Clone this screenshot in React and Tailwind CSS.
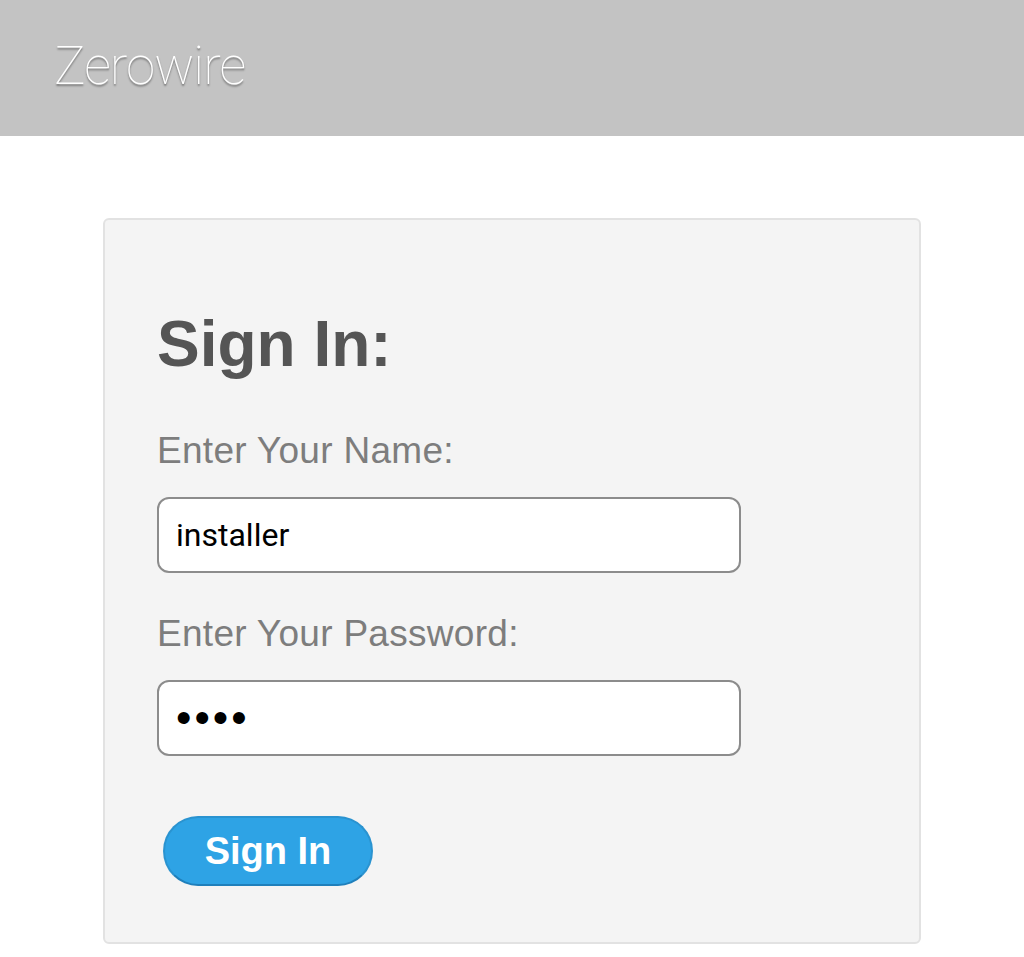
import React from 'react';

const App = () => {
  return (
    <div className="min-h-[957px] bg-white font-['Liberation_Sans',Arial,sans-serif]">
      {/* top bar */}
      <header className="h-[136px] bg-[#c3c3c3] flex items-center pl-[54px]">
        <h1 className="font-['Roboto',sans-serif] font-thin text-[53px] leading-none text-white tracking-[-1px] [text-shadow:0_2px_2px_rgba(0,0,0,0.4)] -mt-[3px]">
          Zerowire
        </h1>
      </header>

      <main className="pt-[82px] pl-[103px]">
        <div className="w-[818px] bg-[#f4f4f4] border-2 border-[#e2e2e2] rounded-[6px] pt-[92px] pb-[56px] pl-[52px]">
          <h2 className="text-[64px] leading-none font-bold text-[#555555]">Sign In:</h2>

          <label className="block mt-[56px] text-[37px] leading-none tracking-[0.3px] text-[#7d7d7d]">Enter Your Name:</label>
          <input
            type="text"
            defaultValue="installer"
            className="block mt-[28px] w-[584px] h-[76px] bg-white border-2 border-[#8c8c8c] rounded-[12px] pl-[17px] font-['Roboto',sans-serif] text-[32px] text-black outline-none"
          />

          <label className="block mt-[42px] text-[37px] leading-none tracking-[0.3px] text-[#7d7d7d]">Enter Your Password:</label>
          <input
            type="password"
            defaultValue="1234"
            className="block mt-[28px] w-[584px] h-[76px] bg-white border-2 border-[#8c8c8c] rounded-[12px] pl-[17px] text-[44px] tracking-[3px] text-black outline-none"
          />

          <button className="mt-[60px] ml-[6px] w-[210px] h-[70px] rounded-full bg-[#2ea3e5] border-2 border-[#2a93d0] border-b-[#1f7fbb] text-white text-[38px] font-bold leading-none">
            Sign In
          </button>
        </div>
      </main>
    </div>
  );
};

export default App;
